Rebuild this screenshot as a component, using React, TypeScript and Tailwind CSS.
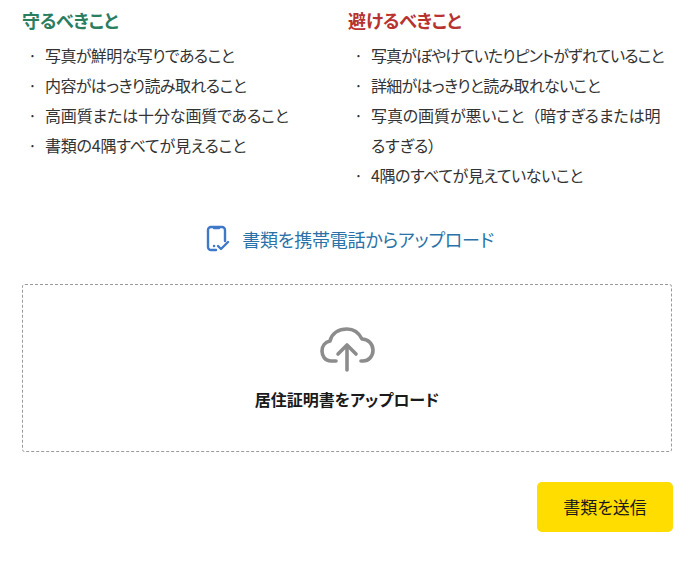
const font = '[font-family:"Noto_Sans_CJK_JP","Noto_Sans",sans-serif] [font-feature-settings:"palt"]';

const good = [
  <span className="tracking-[-0.6px]">写真が鮮明な写りであること</span>,
  <span className="tracking-[-0.6px]">内容がはっきり読み取れること</span>,
  <span className="tracking-[-0.15px]">高画質または十分な画質であること</span>,
  <span className="tracking-[-0.2px]">書類の4隅すべてが見えること</span>,
];

const bad = [
  <span className="tracking-[-0.95px]">写真がぼやけていたりピントがずれていること</span>,
  <span className="tracking-[-0.7px]">詳細がはっきりと読み取れないこと</span>,
  <span className="tracking-[-0.1px]">
    写真の画質が悪いこと<span className="[font-feature-settings:normal]">（</span>暗すぎるまたは明<br />るすぎる）
  </span>,
  '4隅のすべてが見えていないこと',
];

const RuleList = ({ title, color, items }: { title: string; color: string; items: React.ReactNode[] }) => (
  <div className="w-[326px]">
    <h3 className={`text-lg leading-[24px] font-bold tracking-[-0.3px] ${color}`}>{title}</h3>
    <ul className="mt-[8px] text-[#333333] text-base leading-[30px] tracking-[-0.4px]">
      {items.map((item, i) => (
        <li key={i} className="flex pl-[6px]">
          <span className="w-[17px] shrink-0">·</span>
          <span className="w-[303px] whitespace-nowrap">{item}</span>
        </li>
      ))}
    </ul>
  </div>
);

const App = () => {
  return (
    <div className={`w-[700px] h-[562px] bg-white overflow-hidden pl-[22px] pr-[28px] pt-[8px] ${font}`}>
      <div className="flex h-[182px]">
        <RuleList title="守るべきこと" color="text-[#2b7d5f]" items={good} />
        <RuleList title="避けるべきこと" color="text-[#b8322f]" items={bad} />
      </div>
      <div className="flex items-center justify-center gap-[12px] pl-[6px] mt-[31px] h-[36px] text-[#2a72a8] text-lg tracking-[-0.2px]">
        <svg width="24" height="28" viewBox="0 0 24 28" fill="none" stroke="#3f78c9" strokeWidth="2.4" strokeLinecap="round" strokeLinejoin="round">
          <path d="M10 25H5a3 3 0 0 1-3-3V5a3 3 0 0 1 3-3h11a3 3 0 0 1 3 3v11" />
          <path d="M8 3h5" />
          <path d="M8 21h.1" />
          <path d="M12 21l3 3 7-7" />
        </svg>
        <span>書類を携帯電話からアップロード</span>
      </div>
      <div className="mt-[27px] h-[168px] border border-dashed border-[#9a9a9a] rounded-[3px] flex flex-col items-center">
        <svg className="mt-[41px] ml-[2px]" width="56" height="46" viewBox="0 0 56 46" fill="none" stroke="#8c8c8c" strokeWidth="3.6" strokeLinecap="round" strokeLinejoin="round">
          <path d="M16 35h-5C5 35 2 30 2 25c0-5 3-9 8-10C12 7 19 3 27 3c7 0 12 4 15 10 6 0 11 5 11 11 0 6-4 11-10 11h-2" />
          <path d="M27 44V20" />
          <path d="M18 28l9-9 9 9" />
        </svg>
        <p className="mt-[15px] text-[#1a1a1a] text-base leading-[24px] font-bold">居住証明書をアップロード</p>
      </div>
      <div className="flex justify-end mt-[30px] -mr-[1px]">
        <button className="w-[136px] h-[50px] rounded-[5px] bg-[#ffdd00] text-[#1a1a1a] text-[17px]">書類を送信</button>
      </div>
    </div>
  );
};

export default App;
